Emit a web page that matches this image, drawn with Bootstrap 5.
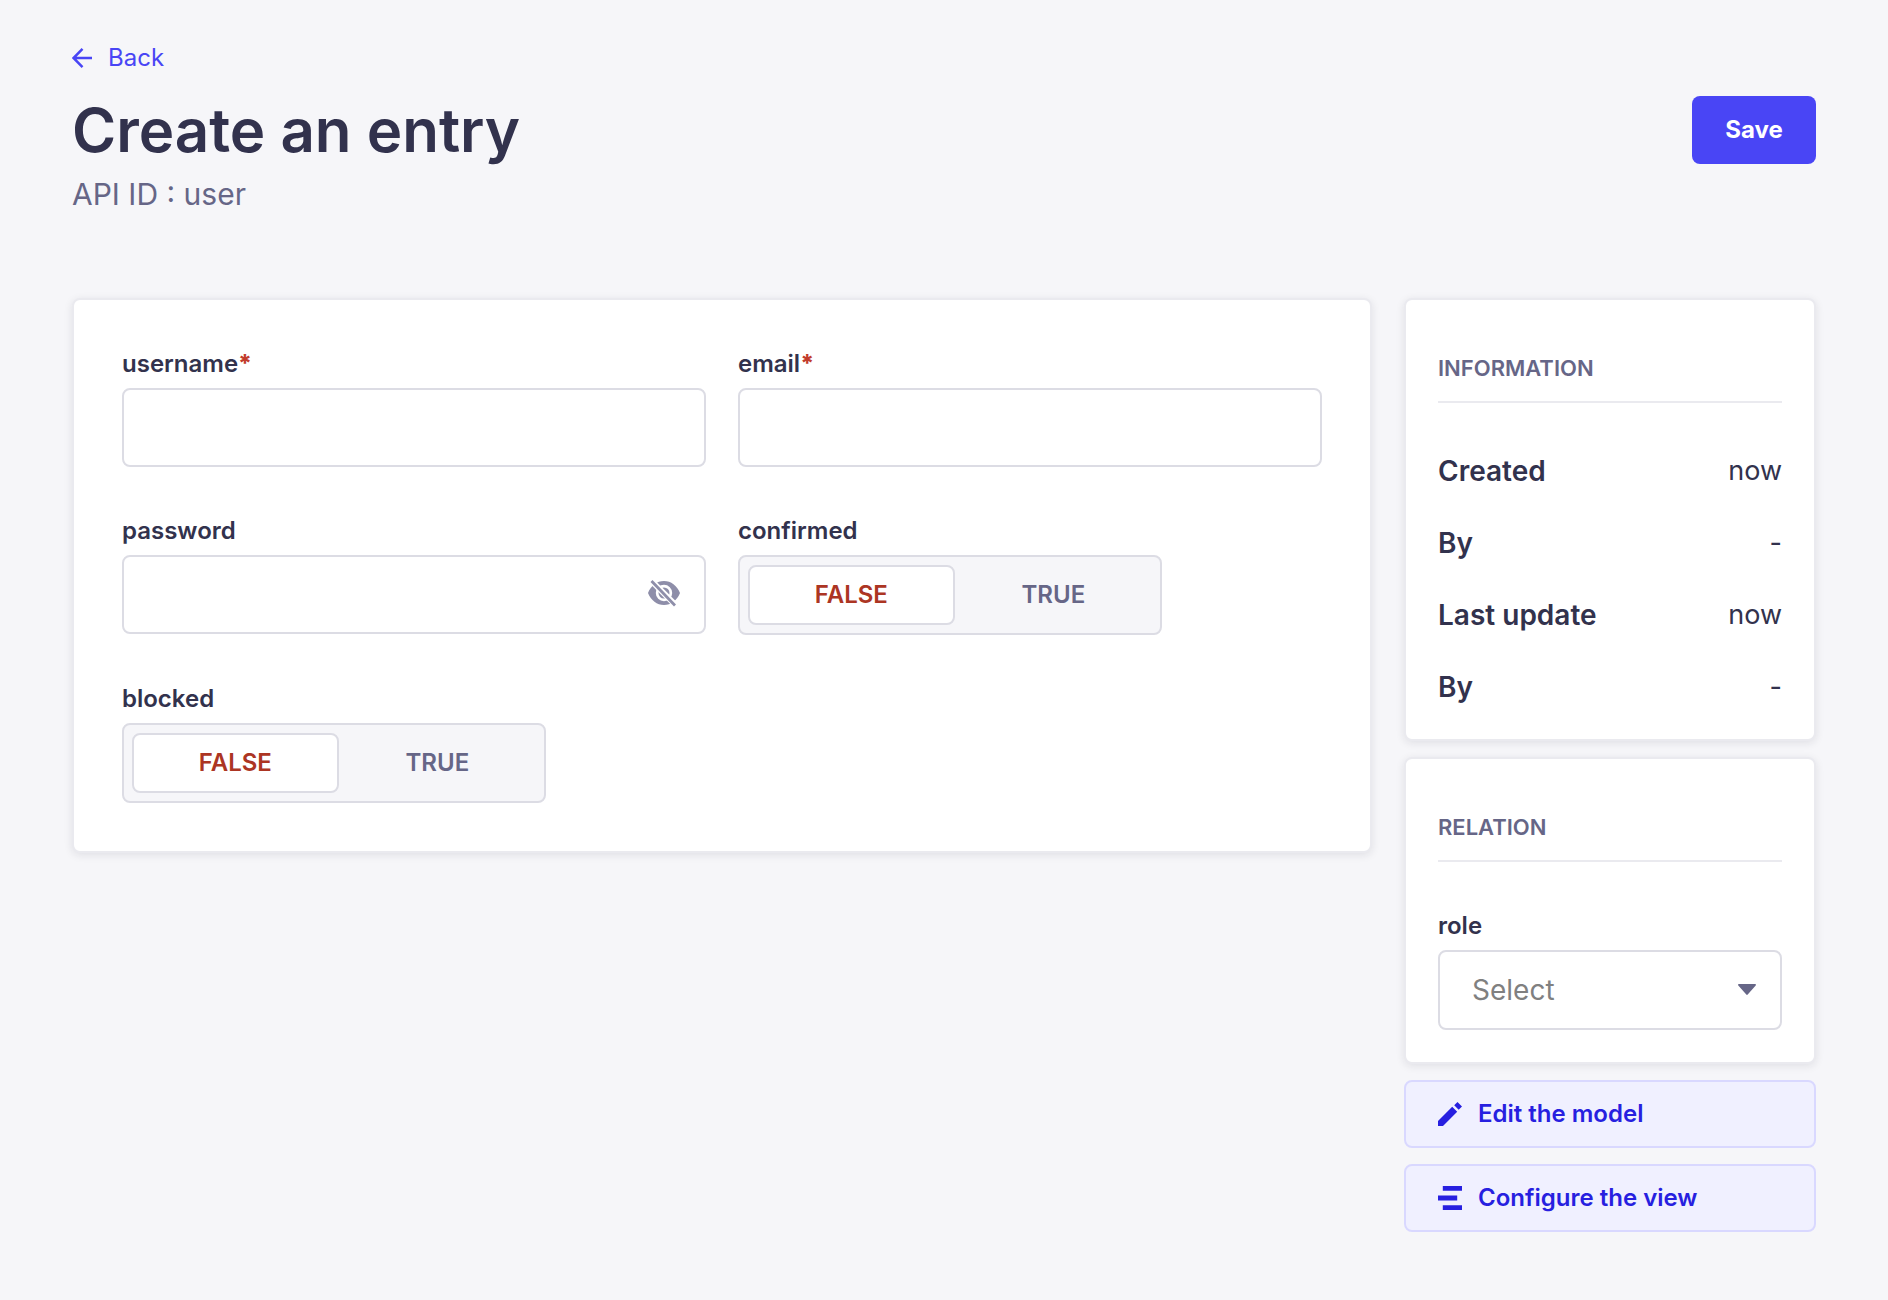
<!DOCTYPE html>
<html lang="en">
<head>
<meta charset="utf-8">
<meta name="viewport" content="width=device-width, initial-scale=1">
<title>Create an entry</title>
<link href="https://cdn.jsdelivr.net/npm/bootstrap@5.3.0/dist/css/bootstrap.min.css" rel="stylesheet">
<style>
  body { background: #f6f6f9; color: #32324d; font-family: Inter, "Liberation Sans", sans-serif; font-size: 28px; line-height: 40px; }
  .page { padding: 40px 72px 68px; }
  .back-link { color: #4945f5; font-size: 24px; line-height: 36px; gap: 16px; }
  .page-title { font-size: 60px; font-weight: 600; line-height: 80px; }
  .page-subtitle { font-size: 30px; line-height: 48px; color: #666687; }
  .page-head { padding: 10px 0 80px; }
  .btn-save { --bs-btn-color: #fff; --bs-btn-bg: #4945f5; --bs-btn-hover-bg: #7b79ff; --bs-btn-hover-color: #fff; --bs-btn-border-width: 0; --bs-btn-font-size: 24px; --bs-btn-font-weight: 700; --bs-btn-border-radius: 8px; height: 68px; width: 124px; }
  .layout { --bs-gutter-x: 32px; }
  .fields { --bs-gutter-x: 32px; --bs-gutter-y: 48px; }
  .panel { background: #fff; border: 2px solid #eaeaef; border-radius: 8px; box-shadow: 0 2px 8px rgba(33, 33, 52, .1); }
  .panel-main { padding: 48px; }
  .panel-side { padding: 48px 32px 32px; }
  .side-stack { gap: 16px; }
  .field-label { display: block; margin-bottom: 8px; font-size: 24px; font-weight: 600; line-height: 32px; }
  .required { color: #c23c2c; font-weight: 800; }
  .field-box { height: 79px; border: 2px solid #dcdce4; border-radius: 8px; background-color: #fff; font-size: 28px; }
  .field-box input { min-width: 0; outline: 0; padding: 0 30px; }
  .eye-button { padding: 0 24px 4px; }
  .toggle { width: 424px; max-width: 100%; height: 80px; padding: 8px; border: 2px solid #dcdce4; border-radius: 8px; background: #f6f6f9; }
  .toggle label { display: flex; align-items: center; justify-content: center; flex: 1 1 auto; border: 2px solid transparent; border-radius: 8px; color: #666687; font-size: 24px; font-weight: 600; padding: 0 56px; cursor: pointer; }
  .toggle .btn-check:checked + label { background: #fff; border-color: #dcdce4; color: #4945f5; }
  .toggle .btn-check:checked + .choice-false { color: #ac3523; }
  .side-title { margin: 0 0 48px; padding-bottom: 13px; border-bottom: 2px solid #eaeaef; color: #666687; font-size: 22px; font-weight: 600; line-height: 40px; }
  .facts { display: grid; gap: 32px; }
  .facts dt { font-weight: 600; }
  .facts dd { font-size: 27px; }
  .role-select { height: 80px; padding: 0 64px 0 32px; border: 2px solid #dcdce4; border-radius: 8px; color: #808080; font-size: 28px; background-image: none; }
  .role-caret { top: 34px; right: 26px; pointer-events: none; }
  .btn-side { --bs-btn-color: #271fe0; --bs-btn-bg: #f0f0ff; --bs-btn-border-color: #d9d8ff; --bs-btn-hover-color: #271fe0; --bs-btn-hover-bg: #fff; --bs-btn-hover-border-color: #d9d8ff; --bs-btn-border-width: 2px; --bs-btn-border-radius: 8px; --bs-btn-font-size: 24px; --bs-btn-font-weight: 600; --bs-btn-padding-x: 32px; --bs-btn-padding-y: 0; height: 68px; gap: 16px; }
  svg { display: block; flex: none; }
</style>
<script src="https://cdn.jsdelivr.net/npm/bootstrap@5.3.0/dist/js/bootstrap.bundle.min.js" defer></script>
</head>
<body>
<main class="page">
  <a href="#" class="back-link d-inline-flex align-items-center text-decoration-none align-top">
    <svg width="20" height="20" viewBox="0 0 20 20" fill="none" stroke="currentColor" stroke-width="2.5" aria-hidden="true"><path d="M20 10H2M10.500.9 1.500 10l9 9.100"/></svg>
    Back
  </a>
  <header class="page-head">
    <div class="d-flex justify-content-between align-items-center">
      <h1 class="page-title mb-0">Create an entry</h1>
      <button type="submit" form="entry" class="btn btn-save">Save</button>
    </div>
    <p class="page-subtitle mb-0">API ID : user</p>
  </header>

  <form id="entry" class="row layout align-items-start">
    <div class="col-9">
      <section class="panel panel-main">
        <div class="row fields">
          <div class="col-6">
            <label class="field-label" for="username">username<span class="required">*</span></label>
            <input id="username" type="text" class="form-control field-box">
          </div>
          <div class="col-6">
            <label class="field-label" for="email">email<span class="required">*</span></label>
            <input id="email" type="email" class="form-control field-box">
          </div>
          <div class="col-6">
            <label class="field-label" for="password">password</label>
            <div class="field-box d-flex">
              <input id="password" type="password" class="flex-grow-1 border-0 bg-transparent" autocomplete="new-password">
              <button type="button" class="eye-button btn border-0" aria-label="Show password">
                <svg width="32" height="28" viewBox="0 0 32 28" aria-hidden="true">
                  <mask id="slash-gap"><path fill="#fff" d="M0 0h32v28H0z"/><path d="M3.500 2 28 26.500" stroke="#000" stroke-width="6"/></mask>
                  <g mask="url(#slash-gap)" fill="#8e8ea9">
                    <path fill-rule="evenodd" d="M0 14C3 6.500 9 2 16 2s13 4.500 16 12c-3 7.500-9 12-16 12S3 21.500 0 14ZM16 5.800a8.200 8.200 0 1 0 0 16.400 8.200 8.200 0 0 0 0-16.400Z"/>
                    <circle cx="16" cy="14" r="5.500"/>
                  </g>
                  <path d="M3.500 2 27 26.500" stroke="#8e8ea9" stroke-width="2.800"/>
                </svg>
              </button>
            </div>
          </div>
          <div class="col-6">
            <span class="field-label" id="confirmed-label">confirmed</span>
            <div class="toggle d-flex" role="radiogroup" aria-labelledby="confirmed-label">
              <input class="btn-check" type="radio" name="confirmed" id="confirmed-false" checked>
              <label class="choice-false" for="confirmed-false">FALSE</label>
              <input class="btn-check" type="radio" name="confirmed" id="confirmed-true">
              <label for="confirmed-true">TRUE</label>
            </div>
          </div>
          <div class="col-6">
            <span class="field-label" id="blocked-label">blocked</span>
            <div class="toggle d-flex" role="radiogroup" aria-labelledby="blocked-label">
              <input class="btn-check" type="radio" name="blocked" id="blocked-false" checked>
              <label class="choice-false" for="blocked-false">FALSE</label>
              <input class="btn-check" type="radio" name="blocked" id="blocked-true">
              <label for="blocked-true">TRUE</label>
            </div>
          </div>
        </div>
      </section>
    </div>

    <aside class="col-3">
      <div class="side-stack d-flex flex-column">
        <section class="panel panel-side">
          <h2 class="side-title">INFORMATION</h2>
          <dl class="facts mb-0">
            <div class="d-flex justify-content-between"><dt>Created</dt><dd class="mb-0">now</dd></div>
            <div class="d-flex justify-content-between"><dt>By</dt><dd class="mb-0">-</dd></div>
            <div class="d-flex justify-content-between"><dt>Last update</dt><dd class="mb-0">now</dd></div>
            <div class="d-flex justify-content-between"><dt>By</dt><dd class="mb-0">-</dd></div>
          </dl>
        </section>
        <section class="panel panel-side">
          <h2 class="side-title">RELATION</h2>
          <label class="field-label" for="role">role</label>
          <div class="position-relative">
            <select id="role" class="form-select role-select"><option>Select</option></select>
            <svg class="role-caret position-absolute" width="18" height="11" viewBox="0 0 18 11" aria-hidden="true"><path fill="#666687" d="M.9 0h16.200c.8 0 1.200.9.600 1.500l-8 9c-.4.500-1 .5-1.400 0l-8-9C-.3.900.100 0 .9 0Z"/></svg>
          </div>
        </section>
        <a href="#" class="btn btn-side d-flex align-items-center">
          <svg width="24" height="24" viewBox="0 0 24 24" fill="currentColor" aria-hidden="true"><path d="M0 19 14.200 4.800l5 5L5 24H0ZM16.200 3.300 19.500 0 24 4.500l-3.300 3.300Z"/></svg>
          Edit the model
        </a>
        <a href="#" class="btn btn-side d-flex align-items-center">
          <svg width="24" height="24" viewBox="0 0 24 24" fill="currentColor" aria-hidden="true"><path d="M4.800 0H24v4.800H4.800ZM0 9.600h19.200v4.800H0ZM4.800 19.200H24V24H4.800Z"/></svg>
          Configure the view
        </a>
      </div>
    </aside>
  </form>
</main>
</body>
</html>
